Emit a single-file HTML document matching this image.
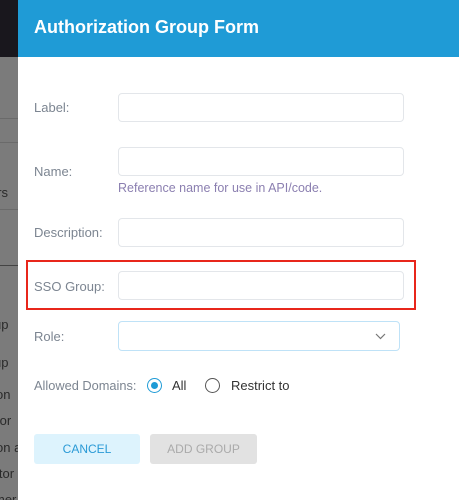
<!DOCTYPE html>
<html><head><style>
*{box-sizing:border-box;margin:0;padding:0}
body{width:459px;height:500px;overflow:hidden;position:relative;font-family:"Liberation Sans",sans-serif;background:#fff}
.strip{position:absolute;left:0;top:0;width:18px;height:500px;background:#7b7b7b;overflow:hidden}
.strip .top{position:absolute;left:0;top:0;width:18px;height:57px;background:#19171d}
.strip span{position:absolute;font-size:13px;color:#2a2a2a;white-space:nowrap}
.strip i{position:absolute;left:0;width:18px;height:1px;background:#6a6a6a}
.hdr{position:absolute;left:18px;top:0;width:441px;height:57px;background:#1f9bd6;color:#fff;font-size:18px;font-weight:bold;padding:17px 16px}
.lbl{position:absolute;left:34px;font-size:13px;color:#7c8591}
.in{position:absolute;left:118px;width:286px;height:29px;border:1px solid #e3e6ea;border-radius:4px;background:#fff}
.help{position:absolute;left:118px;top:181px;font-size:12.5px;color:#8b7fb0}
.red{position:absolute;left:26px;top:260px;width:390px;height:50px;border:2px solid #e8261b}
.sel{position:absolute;left:118px;top:321px;width:282px;height:30px;border:1px solid #bfe2f7;border-radius:4px}
.radio{position:absolute;top:378px;width:15px;height:15px;border-radius:50%;border:1.5px solid #555}
.btn{position:absolute;top:434px;height:30px;border-radius:3px;font-size:12px;text-align:center;line-height:30px}
</style></head><body>
<div class="strip"><div class="top"></div>
<i style="top:118px"></i><i style="top:142px"></i><i style="top:209px"></i><i style="top:265px;background:#444"></i>
<span style="left:-10px;top:185px">ers</span>
<span style="left:-6px;top:317px">up</span>
<span style="left:-6px;top:355px">up</span>
<span style="left:-4px;top:387px">on</span>
<span style="left:-4px;top:413px">for</span>
<span style="left:-4px;top:440px">on a</span>
<span style="left:-4px;top:466px">itor</span>
<span style="left:-6px;top:492px">mer</span>
</div>
<div class="hdr">Authorization Group Form</div>
<div class="lbl" style="top:100px">Label:</div>
<div class="in" style="top:93px"></div>
<div class="lbl" style="top:164px">Name:</div>
<div class="in" style="top:147px"></div>
<div class="help">Reference name for use in API/code.</div>
<div class="lbl" style="top:225px">Description:</div>
<div class="in" style="top:218px"></div>
<div class="red"></div>
<div class="lbl" style="top:279px">SSO Group:</div>
<div class="in" style="top:271px"></div>
<div class="lbl" style="top:329px">Role:</div>
<div class="sel"><svg style="position:absolute;right:13px;top:11px" width="11" height="7" viewBox="0 0 11 7"><path d="M1 1l4.5 4.5L10 1" fill="none" stroke="#777" stroke-width="1.2"/></svg></div>
<div class="lbl" style="top:378px;font-size:12.8px">Allowed Domains:</div>
<div class="radio" style="left:147px;border-color:#1f9bd6"><div style="position:absolute;left:2.5px;top:2.5px;width:7px;height:7px;border-radius:50%;background:#1f9bd6"></div></div>
<div style="position:absolute;left:172px;top:378px;font-size:13px;color:#333">All</div>
<div class="radio" style="left:205px"></div>
<div style="position:absolute;left:231px;top:378px;font-size:13px;color:#333">Restrict to</div>
<div class="btn" style="left:34px;width:106px;background:#ddf3fd;color:#2a9ad6">CANCEL</div>
<div class="btn" style="left:150px;width:107px;background:#e2e2e2;color:#aaa">ADD GROUP</div>
</body></html>
